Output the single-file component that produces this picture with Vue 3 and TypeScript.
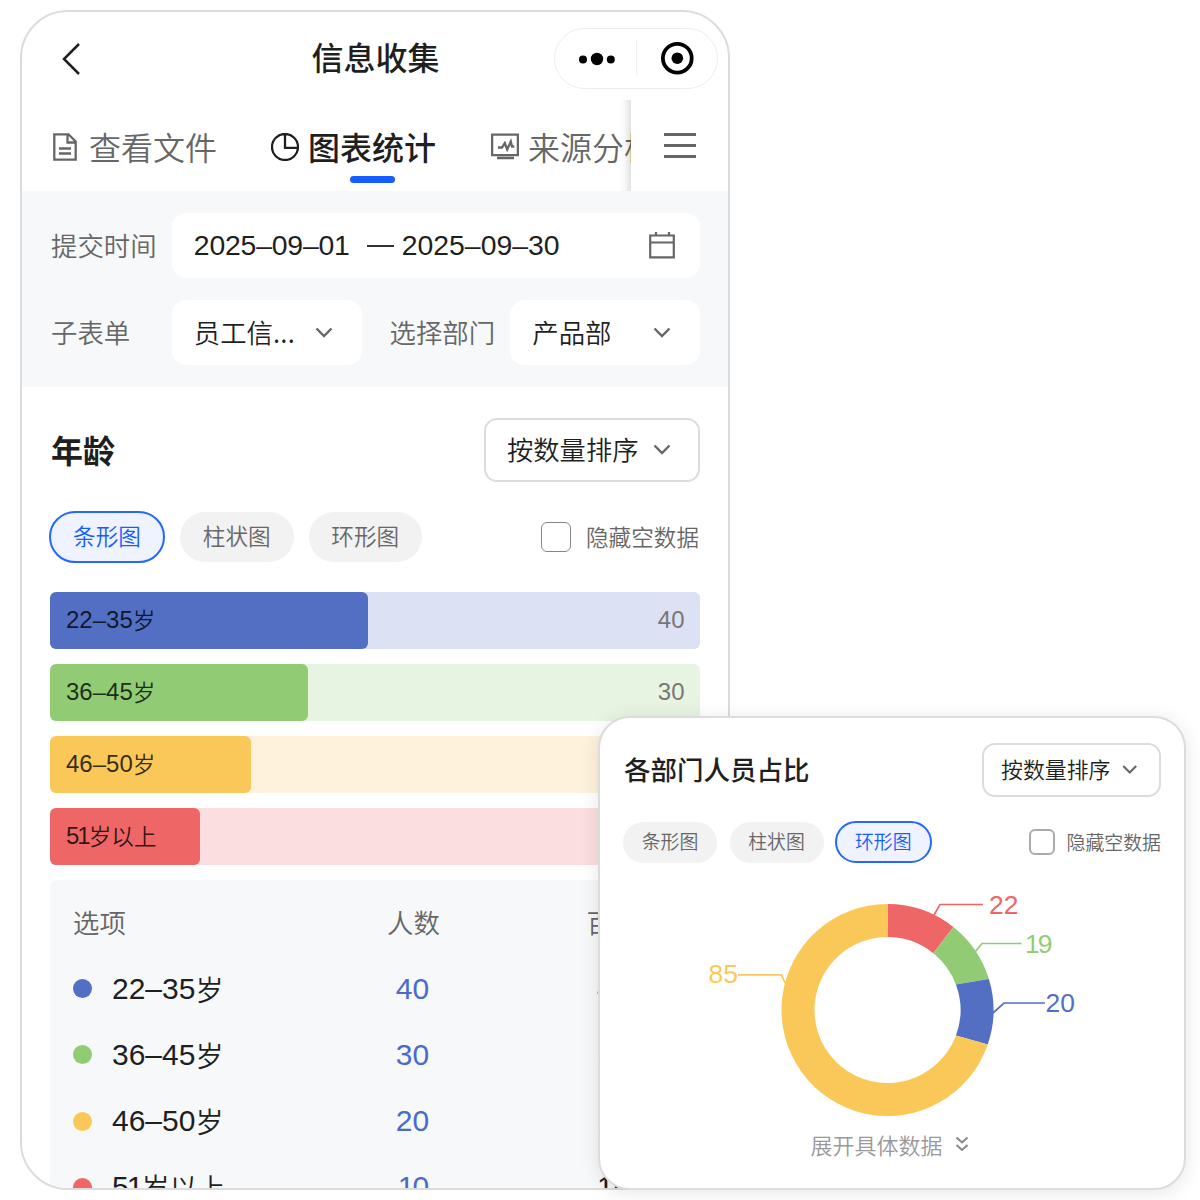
<script setup lang="ts">
interface Bar {
  digits: string
  suffix: string
  count: number
  width: number
  color: string
  track: string
  percent: string
}

interface Slice {
  from: number
  to: number
  innerFrom: number
  innerTo: number
  color: string
}

interface Callout {
  value: number
  color: string
  points: string
  x: number
  y: number
}

const bars: Bar[] = [
  { digits: '22–35', suffix: '岁', count: 40, width: 318, color: '#526fc4', track: '#dce1f4', percent: '40%' },
  { digits: '36–45', suffix: '岁', count: 30, width: 258, color: '#91cc75', track: '#e8f4e2', percent: '30%' },
  { digits: '46–50', suffix: '岁', count: 20, width: 201, color: '#fac858', track: '#fef2dc', percent: '20%' },
  { digits: '51', suffix: '岁以上', count: 10, width: 150, color: '#ee6666', track: '#fbdfe0', percent: '10%' },
]

const chartTypes: string[] = ['条形图', '柱状图', '环形图']

const slices: Slice[] = [
  { from: 0, to: 38.4, innerFrom: 0, innerTo: 38.9, color: '#ee6666' },
  { from: 38.4, to: 73, innerFrom: 38.9, innerTo: 69.5, color: '#91cc75' },
  { from: 73, to: 109, innerFrom: 69.5, innerTo: 110.4, color: '#526fc4' },
  { from: 109, to: 360, innerFrom: 110.4, innerTo: 360, color: '#fac858' },
]

const callouts: Callout[] = [
  { value: 22, color: '#ee6666', points: '334,36 340,25.5 383,25.5', x: 389, y: 35 },
  { value: 19, color: '#91cc75', points: '375.5,72.5 382,64.5 421.5,64.5', x: 425, y: 74 },
  { value: 20, color: '#526fc4', points: '393,134 404,124 445,124', x: 445.5, y: 132.5 },
  { value: 85, color: '#fac858', points: '138,95.8 181.5,95.8 185,104', x: 108.5, y: 104 },
]

const cx = 287.5
const cy = 131

function point(radius: number, degrees: number): string {
  const a = (degrees * Math.PI) / 180
  return `${(cx + radius * Math.sin(a)).toFixed(2)} ${(cy - radius * Math.cos(a)).toFixed(2)}`
}

function ring(s: Slice): string {
  const large = s.to - s.from > 180 ? 1 : 0
  return `M${point(106, s.from)}A106 106 0 ${large} 1 ${point(106, s.to)}L${point(73, s.innerTo)}A73 73 0 ${large} 0 ${point(73, s.innerFrom)}Z`
}
</script>

<template>
  <div class="stage">
    <main class="phone">
      <header class="nav">
        <svg class="back" width="20" height="34" viewBox="0 0 20 34"><path d="M18 2 3 17 18 32" /></svg>
        <h1>信息收集</h1>
        <div class="capsule">
          <svg width="162" height="59" viewBox="0 0 162 59">
            <circle cx="28" cy="30.5" r="4" /><circle cx="42" cy="30" r="6.2" /><circle cx="55.8" cy="30.5" r="4" />
            <path d="M81.7 11v35" stroke="#eee" />
            <circle cx="122.3" cy="29.2" r="14.4" fill="none" stroke="#000" stroke-width="3.8" />
            <circle cx="122.3" cy="29.2" r="5.8" />
          </svg>
        </div>
      </header>

      <nav class="tabs">
        <div class="strip">
          <span class="tab t1">
            <svg width="24" height="28" viewBox="0 0 24 28"><path d="M1.3 1.3H15.500L22.700 8.500v18.200H1.300ZM14.500 1.500v8h8M6 15.500h12M6 20.500h12" /></svg>查看文件
          </span>
          <span class="tab t2">
            <svg width="28" height="28" viewBox="0 0 28 28"><path d="M14 1a13 13 0 1 0 0 26a13 13 0 1 0 0-26ZM14 1v13.800h12.800" /></svg>图表统计
          </span>
          <span class="tab t3">
            <svg width="28" height="27" viewBox="0 0 28 27"><path d="M1.100 1.600h25.800v20.500H1.100ZM6 25h17M7 14.500h4l2.800-4.500 2.400 6.500 3.600-8 1.200 5h2.300" /></svg>来源分析
          </span>
        </div>
        <div class="menu"><i></i><i></i><i></i></div>
      </nav>

      <section class="filters">
        <div class="line">
          <label>提交时间</label>
          <div class="field date">
            <span class="num start">2025–09–01</span><em></em><span class="num">2025–09–30</span>
            <svg class="cal" width="26" height="28" viewBox="0 0 26 28"><path d="M1.200 3.500h23.600v21.800H1.200ZM1.200 10.500h23.600M7 0v4M20 0v4" /></svg>
          </div>
        </div>
        <div class="line">
          <label>子表单</label>
          <div class="field half"><span>员工信<span class="dots">...</span></span><svg class="chev" viewBox="0 0 18 11"><path d="m1.500 1.500 7.500 7.500 7.500-7.500" /></svg></div>
          <label class="dept">选择部门</label>
          <div class="field half"><span>产品部</span><svg class="chev" viewBox="0 0 18 11"><path d="m1.500 1.500 7.500 7.500 7.500-7.500" /></svg></div>
        </div>
      </section>

      <section class="age">
        <div class="head">
          <h2>年龄</h2>
          <div class="sort">按数量排序<svg class="chev" viewBox="0 0 18 11"><path d="m1.500 1.500 7.500 7.500 7.500-7.500" /></svg></div>
        </div>
        <div class="options">
          <span v-for="(t, i) in chartTypes" :key="t" class="pill" :class="{ on: i === 0 }">{{ t }}</span>
          <span class="check"><i></i>隐藏空数据</span>
        </div>
        <div class="bars">
          <div v-for="b in bars" :key="b.digits" class="bar" :style="{ background: b.track }">
            <div class="fill" :style="{ width: b.width + 'px', background: b.color }">
              <span class="num" :class="{ tight: b.digits === '51' }">{{ b.digits }}</span>{{ b.suffix }}
            </div>
            <span class="num count">{{ b.count }}</span>
          </div>
        </div>
        <div class="table">
          <div class="row th"><span>选项</span><span class="c2">人数</span><span class="c3">百分比</span></div>
          <div v-for="b in bars" :key="b.digits" class="row">
            <span class="name"><i :style="{ background: b.color }"></i><span class="num" :class="{ tight: b.digits === '51' }">{{ b.digits }}</span>{{ b.suffix }}</span>
            <span class="c2 num" :class="{ tight: b.count === 10 }">{{ b.count }}</span>
            <span class="c3 num">{{ b.percent }}</span>
          </div>
        </div>
      </section>
    </main>

    <aside class="card">
      <div class="head">
        <h2>各部门人员占比</h2>
        <div class="sort">按数量排序<svg class="chev" viewBox="0 0 18 11"><path d="m1.500 1.500 7.500 7.500 7.500-7.500" /></svg></div>
      </div>
      <div class="options">
        <span v-for="(t, i) in chartTypes" :key="t" class="pill" :class="{ on: i === 2 }">{{ t }}</span>
        <span class="check"><i></i>隐藏空数据</span>
      </div>
      <svg class="donut" width="583" height="250" viewBox="0 0 583 250">
        <path v-for="s in slices" :key="s.from" :d="ring(s)" :fill="s.color" />
        <g v-for="c in callouts" :key="c.value">
          <polyline :points="c.points" :stroke="c.color" fill="none" stroke-width="1.7" />
          <text :x="c.x" :y="c.y" :fill="c.color" :class="{ tight: c.value === 19 }">{{ c.value }}</text>
        </g>
      </svg>
      <div class="more">展开具体数据<svg width="14" height="16" viewBox="0 0 14 16"><path d="m1.500 1.500 5.500 5 5.500-5M1.500 9l5.500 5L12.500 9" /></svg></div>
    </aside>
  </div>
</template>

<style>
body {
  background: #fff;
}
</style>

<style scoped>
* {
  box-sizing: border-box;
}
.stage {
  position: relative;
  width: 1200px;
  height: 1200px;
  padding: 10px 20px;
  overflow: hidden;
  background: #fff;
  color: #1f1f1f;
  font-family: 'Noto Sans CJK SC', sans-serif;
  font-weight: 350;
  line-height: 1;
  white-space: nowrap;
}
h1,
h2 {
  margin: 0;
  font-weight: 500;
}
svg {
  display: block;
  flex: none;
}
.num {
  font-family: 'Liberation Sans', sans-serif;
}
.tight {
  letter-spacing: -2px;
}
.phone {
  width: 710px;
  height: 1180px;
  border: 2px solid #dcdcdc;
  border-radius: 48px;
  overflow: hidden;
}
.nav {
  display: grid;
  grid-template-columns: 200px 1fr 200px;
  align-items: center;
  height: 93px;
}
.nav h1 {
  padding: 0 0 5px 1px;
  font-size: 32px;
  text-align: center;
}
.back {
  margin-left: 39px;
  fill: none;
  stroke: #1f1f1f;
  stroke-width: 2.500px;
}
.capsule {
  width: 164px;
  height: 61px;
  margin-left: 26px;
  border: 1px solid #ececec;
  border-radius: 31px;
}
.tabs {
  display: flex;
  height: 86px;
}
.strip {
  display: flex;
  width: 609px;
  overflow: hidden;
  padding-left: 31px;
}
.tab {
  display: flex;
  align-items: center;
  flex: none;
  height: 86px;
  padding-bottom: 5px;
  font-size: 32px;
  color: #666;
}
.tab svg {
  fill: none;
  stroke: #666;
  stroke-width: 2.300px;
  margin: 2px 12px 0 0;
}
.t2 {
  position: relative;
  margin-left: 54px;
  color: #1f1f1f;
  font-weight: 500;
}
.t2 svg {
  margin-right: 9px;
  stroke: #1f1f1f;
}
.t2::after {
  content: '';
  position: absolute;
  left: 78.500px;
  bottom: 8px;
  width: 45.500px;
  height: 7px;
  border-radius: 4px;
  background: #165dff;
}
.t3 {
  margin-left: 55px;
}
.t3 svg {
  margin-right: 9px;
}
.menu {
  position: relative;
  display: flex;
  flex-direction: column;
  align-items: center;
  gap: 8.500px;
  width: 97px;
  padding: 28px 0 0 1px;
  background: #fff;
}
.menu::before {
  content: '';
  position: absolute;
  top: -5px;
  bottom: 0;
  left: -12px;
  width: 12px;
  background: linear-gradient(to right, rgba(0, 0, 0, 0), rgba(0, 0, 0, 0.03) 50%, rgba(0, 0, 0, 0.12));
}
.menu i {
  width: 32px;
  height: 2.700px;
  background: #666;
}
.filters {
  display: flex;
  flex-direction: column;
  gap: 22px;
  height: 196px;
  padding: 22px 28px 0 29px;
  background: #f7f8fa;
  font-size: 26.400px;
}
.line {
  display: flex;
  align-items: center;
  height: 65px;
}
label {
  width: 121px;
  color: #666;
}
.field {
  display: flex;
  align-items: center;
  height: 65px;
  padding: 0 25px 0 22px;
  border-radius: 14px;
  background: #fff;
}
.field .num {
  font-size: 28.400px;
}
.field .start {
  letter-spacing: -0.200px;
}
.dots {
  letter-spacing: 0.300px;
}
.date {
  width: 529px;
}
.date em {
  width: 27px;
  height: 2px;
  margin: 0 8px 0 17px;
  background: #333;
}
.cal {
  margin-left: auto;
  fill: none;
  stroke: #666;
  stroke-width: 2.200px;
}
.half {
  justify-content: space-between;
  width: 190px;
  padding-right: 29px;
}
.dept {
  margin-left: 28px;
}
.chev {
  width: 18px;
  height: 11px;
  fill: none;
  stroke: #666;
  stroke-width: 2.400px;
}
.age {
  padding: 31px 28px 0;
}
.head {
  display: flex;
  align-items: center;
  justify-content: space-between;
}
.age h2 {
  padding: 0 0 3px 1px;
  font-size: 32px;
  font-weight: 700;
}
.sort {
  display: flex;
  align-items: center;
  justify-content: space-between;
  width: 216px;
  height: 64px;
  padding: 0 27px 1px 21px;
  border: 2px solid #dcdcdc;
  border-radius: 13px;
  font-size: 26.300px;
}
.options {
  display: flex;
  align-items: center;
}
.age .options {
  height: 52px;
  margin-top: 29px;
  gap: 15px;
}
.pill {
  display: flex;
  align-items: center;
  justify-content: center;
  width: 113.500px;
  height: 50px;
  padding-bottom: 1px;
  border-radius: 26px;
  background: #f2f2f2;
  color: #666;
  font-size: 22.600px;
}
.pill.on {
  border: 2px solid #2468ff;
  background: #eef3ff;
  color: #165dff;
}
.age .pill.on {
  width: 116px;
  height: 52px;
  margin-left: -1px;
}
.check {
  display: flex;
  align-items: center;
  margin-left: auto;
  color: #666;
  font-size: 22.600px;
}
.age .check {
  margin-right: 1px;
}
.check i {
  width: 30px;
  height: 30px;
  margin-right: 15px;
  border: 1.500px solid #888;
  border-radius: 6px;
}
.bars {
  display: flex;
  flex-direction: column;
  gap: 15.500px;
  margin-top: 29px;
}
.bar {
  display: flex;
  align-items: center;
  justify-content: space-between;
  height: 56.500px;
  padding-right: 15.500px;
  border-radius: 6px;
  font-size: 22.600px;
}
.bar .num {
  font-size: 24px;
}
.fill {
  display: flex;
  align-items: center;
  height: 100%;
  padding-left: 16px;
  border-radius: 6px;
  color: rgba(0, 0, 0, 0.8);
}
.count {
  color: #777;
}
.table {
  height: 330px;
  margin-top: 15px;
  padding-top: 10.500px;
  border-radius: 8px;
  background: #f7f8fa;
}
.row {
  display: grid;
  grid-template-columns: 302px 121px 1fr;
  align-items: center;
  height: 66.200px;
  padding-bottom: 1px;
  font-size: 28px;
}
.row .num {
  font-size: 30px;
}
.th {
  padding-left: 23px;
  grid-template-columns: 280px 121px 1fr;
  color: #666;
  font-size: 26.400px;
}
.name {
  display: flex;
  align-items: center;
}
.name i {
  width: 19px;
  height: 19px;
  margin: 0 20px 0 23px;
  border-radius: 50%;
}
.c2,
.c3 {
  text-align: center;
}
.c2.num {
  color: #4a6bc9;
}
.c3 {
  width: 308px;
}
.th .c3 {
  width: 304px;
}
.card {
  position: absolute;
  left: 598px;
  top: 716px;
  width: 588px;
  height: 474px;
  padding: 25px 23px 0;
  border: 2px solid #dcdcdc;
  border-radius: 32px;
  background: #fff;
  box-shadow: 0 3px 20px rgba(0, 0, 0, 0.1);
}
.card h2 {
  padding: 0 0 1px 1px;
  font-size: 26.500px;
}
.card .sort {
  width: 179px;
  height: 54px;
  padding: 0 22px 2px 17px;
  font-size: 21.900px;
}
.card .chev {
  width: 15.500px;
}
.card .options {
  height: 42px;
  margin-top: 24px;
  gap: 12.500px;
}
.card .pill {
  width: 94px;
  height: 41px;
  padding-bottom: 2px;
  font-size: 18.900px;
}
.card .pill.on {
  width: 96.500px;
  height: 42px;
  margin-left: -1px;
}
.card .check {
  font-size: 18.900px;
}
.card .check i {
  width: 26px;
  height: 26px;
  margin-right: 12px;
  border: 2px solid #aaa;
}
.donut {
  margin: 16px 0 0 -23px;
}
.donut text {
  font-family: 'Liberation Sans', sans-serif;
  font-size: 26.400px;
}
.more {
  display: flex;
  align-items: center;
  justify-content: center;
  margin: 4px 5px 0 0;
  color: #999;
  font-size: 22px;
}
.more svg {
  margin-left: 12px;
  fill: none;
  stroke: #888;
  stroke-width: 2px;
}
</style>
